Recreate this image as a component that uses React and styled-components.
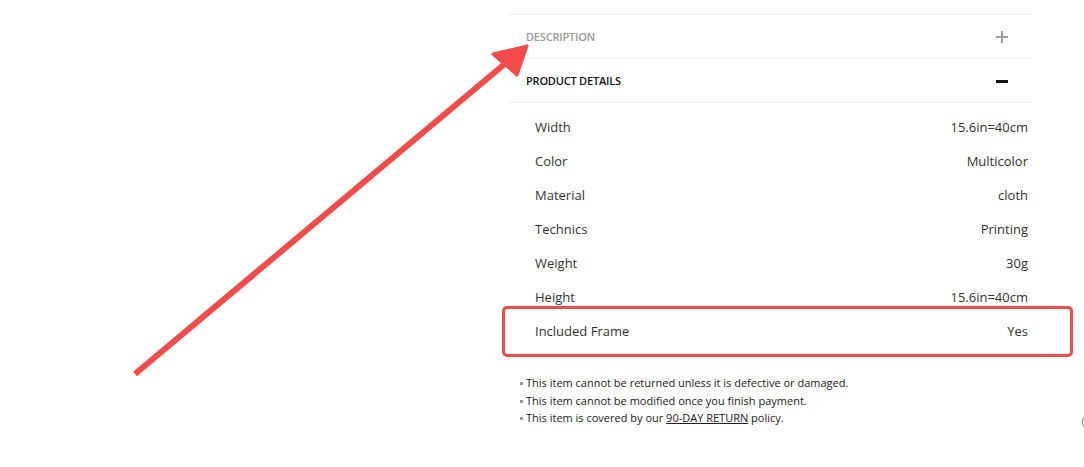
import React from 'react';
import styled, { createGlobalStyle } from 'styled-components';

const GlobalStyle = createGlobalStyle`
  body {
    margin: 0;
    background: #fff;
    font-family: 'Open Sans', 'Liberation Sans', sans-serif;
  }
`;

const Page = styled.div`
  position: relative;
  width: 1084px;
  height: 467px;
  overflow: hidden;
  display: flex;
  padding-left: 508px;
  padding-top: 14px;
  box-sizing: border-box;
`;

const Panel = styled.div`
  width: 524px;
  display: flex;
  flex-direction: column;
`;

const Header = styled.div`
  height: 44px;
  display: flex;
  align-items: center;
  justify-content: space-between;
  padding: 0 24px 0 18px;
  border-top: 1px solid #f0f0f0;
  box-sizing: border-box;
  font-size: 11px;
  font-weight: 600;
  letter-spacing: -0.2px;
  color: ${props => (props.open ? '#111' : '#999')};
  &:last-of-type {
    border-bottom: 1px solid #f0f0f0;
  }
`;

const Toggle = styled.span`
  position: relative;
  width: 12px;
  height: 12px;
  &::before {
    content: '';
    position: absolute;
    left: 0;
    top: 5px;
    width: 12px;
    height: ${props => (props.open ? 3 : 2)}px;
    background: ${props => (props.open ? '#111' : '#a0a0a0')};
  }
  &::after {
    content: '';
    display: ${props => (props.open ? 'none' : 'block')};
    position: absolute;
    left: 5px;
    top: 0;
    width: 2px;
    height: 12px;
    background: #a0a0a0;
  }
`;

const Specs = styled.div`
  border-top: 1px solid #f0f0f0;
  padding: 7px 4px 0 27px;
  display: flex;
  flex-direction: column;
`;

const SpecRow = styled.div`
  height: 34px;
  display: flex;
  align-items: center;
  justify-content: space-between;
  font-size: 13px;
  color: #333;
`;

const Notes = styled.ul`
  list-style: none;
  margin: 26px 0 0;
  padding: 0 0 0 12px;
  font-size: 11px;
  line-height: 17.5px;
  color: #222;
`;

const Note = styled.li`
  position: relative;
  padding-left: 6px;
  &::before {
    content: '';
    position: absolute;
    left: 0;
    top: 8px;
    width: 3px;
    height: 3px;
    background: #999;
  }
  a {
    color: #222;
    text-decoration: underline;
  }
`;

const Highlight = styled.div`
  position: absolute;
  left: 502px;
  top: 306px;
  width: 571px;
  height: 51px;
  border: 3px solid #f24c4a;
  border-radius: 5px;
  box-sizing: border-box;
`;

const ArrowLayer = styled.svg`
  position: absolute;
  left: 0;
  top: 0;
  pointer-events: none;
`;

const EdgeButton = styled.div`
  position: absolute;
  left: 1082px;
  top: 412px;
  width: 18px;
  height: 18px;
  border-radius: 50%;
  border: 1.5px solid #777;
`;

const specs = [
  ['Width', '15.6in=40cm'],
  ['Color', 'Multicolor'],
  ['Material', 'cloth'],
  ['Technics', 'Printing'],
  ['Weight', '30g'],
  ['Height', '15.6in=40cm'],
  ['Included Frame', 'Yes'],
];

const App = () => (
  <Page>
    <GlobalStyle />
    <Panel>
      <Header>
        DESCRIPTION
        <Toggle />
      </Header>
      <Header open>
        PRODUCT DETAILS
        <Toggle open />
      </Header>
      <Specs>
        {specs.map(([label, value]) => (
          <SpecRow key={label}>
            <span>{label}</span>
            <span>{value}</span>
          </SpecRow>
        ))}
      </Specs>
      <Notes>
        <Note>This item cannot be returned unless it is defective or damaged.</Note>
        <Note>This item cannot be modified once you finish payment.</Note>
        <Note>
          This item is covered by our <a>90-DAY RETURN</a> policy.
        </Note>
      </Notes>
    </Panel>
    <Highlight />
    <ArrowLayer width="1084" height="467" viewBox="0 0 1084 467">
      <line x1="135" y1="374" x2="507" y2="62" stroke="#f24c4a" strokeWidth="6" />
      <polygon points="527,46 493,54 517,75" fill="#f24c4a" stroke="#f24c4a" strokeWidth="3" strokeLinejoin="round" />
    </ArrowLayer>
    <EdgeButton />
  </Page>
);

export default App;
